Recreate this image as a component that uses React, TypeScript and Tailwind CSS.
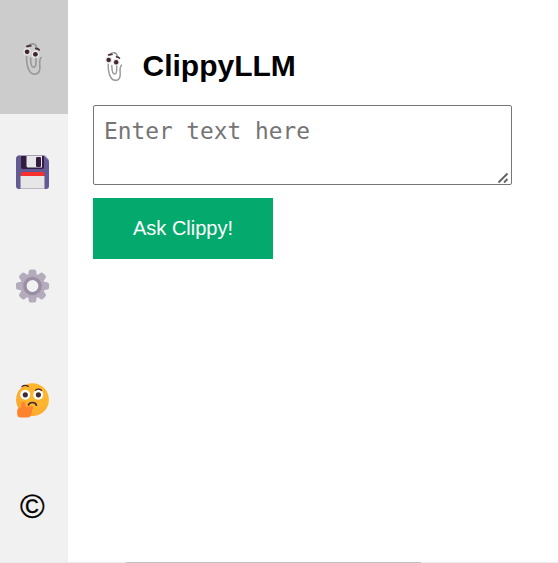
import React from "react";

function Clippy({ className }: { className: string }) {
  return (
    <svg viewBox="0 0 20 34" preserveAspectRatio="none" className={className} fill="none">
      <path
        d="M5.4 4.5C7.2.9 12.8.8 13.6 5.6M3.6 14.2C3.4 19 4.1 24.5 6.1 28.4C9.1 34 16 33.2 16.8 27.2C17.4 22.8 15.3 18.9 18.2 15.5M7.6 16C7.8 19.5 7.4 24.6 10.4 25.2C13.2 25.7 13.1 21.4 13 16"
        stroke="#999"
        strokeWidth="1.6"
        strokeLinecap="round"
      />
      <circle cx="4.1" cy="9.8" r="3.8" fill="#e6e6e6" />
      <circle cx="12.4" cy="12.3" r="3.8" fill="#e6e6e6" />
      <circle cx="4.1" cy="9.8" r="2.4" fill="#3e2530" />
      <circle cx="12.4" cy="12.3" r="2.4" fill="#3e2530" />
      <path d="M3.9 4.4Q5.6 3.6 7.8 3.8M12.8 6.5Q15 6.4 16.1 7.9" stroke="#4b343e" strokeWidth="1.8" strokeLinecap="round" />
    </svg>
  );
}

function Floppy() {
  return (
    <svg viewBox="0 0 34 34" className="size-[34px]">
      <path d="M4 .3H27Q29 .3 30 1.5L32 4Q33 5 33 7V31Q33 34 30 34H3Q0 34 0 31V4Q0 .3 4 .3Z" fill="#635994" />
      <path d="M4 .8H27Q29 .8 30 2L32 4.5" fill="none" stroke="#b4acbc" />
      <path d="M5 1H28V12Q28 14 26 14H7Q5 14 5 12Z" fill="#321b41" />
      <path d="M10.5 1H26V12.5H12Q10.5 12.5 10.5 11Z" fill="#e6e6e6" />
      <rect x="20" y="2" width="5" height="10" rx="1.2" fill="#321b41" />
      <path d="M5 21H28V34H5Z" fill="#e6e6e6" />
      <path d="M6 17H27Q28 17 28 18V21H5V18Q5 17 6 17Z" fill="#f92f2d" />
      <path d="M4.5 21V33.5H28.5V21" fill="none" stroke="#b4acbc" strokeWidth=".8" />
    </svg>
  );
}

const teeth = [0, 45, 90, 135, 180, 225, 270, 315];

function Gear() {
  return (
    <svg viewBox="0 0 34 34" className="size-[34px]">
      {teeth.map((a) => (
        <path
          key={a}
          d="M12 8L12.7 2.6Q12.9 .4 15 .4H18Q20.1 .4 20.3 2.6L21 8Z"
          fill="#b4acbc"
          transform={`rotate(${a} 16.5 17)`}
        />
      ))}
      <circle cx="16.5" cy="17" r="9.4" fill="none" stroke="#b4acbc" strokeWidth="6" />
      <circle cx="16.5" cy="17" r="7.6" fill="none" stroke="#998ea4" strokeWidth="3.4" />
    </svg>
  );
}

function Thinking() {
  return (
    <svg viewBox="0 0 34 35" className="h-[35px] w-[34px]">
      <defs>
        <radialGradient id="face" cx=".65" cy=".35" r=".75">
          <stop offset=".5" stopColor="#ffb52e" />
          <stop offset="1" stopColor="#fba52b" />
        </radialGradient>
      </defs>
      <circle cx="16.5" cy="16.7" r="16.4" fill="url(#face)" />
      <circle cx="9.2" cy="11.8" r="5" fill="white" />
      <circle cx="22.3" cy="11.8" r="5" fill="white" />
      <circle cx="9.3" cy="11.8" r="2.6" fill="#402a32" />
      <circle cx="22.4" cy="11.8" r="2.6" fill="#402a32" />
      <path d="M6 3.6Q8.8 1.4 12.2 3.4M19.4 7.2Q22.6 5.1 25.6 7.4" fill="none" stroke="#402a32" strokeWidth="1.3" strokeLinecap="round" />
      <path d="M12.5 22Q13.2 19.5 16.4 19.5Q19.6 19.5 20.4 22.2" fill="none" stroke="#402a32" strokeWidth="1.7" strokeLinecap="round" />
      <path d="M5.3 24.5V20.5Q5.6 18.7 7.3 18.7Q9 18.7 9.2 20.5L9.6 24L15.5 23.3Q17.7 23.4 17.2 25.4L15.8 27Q16.8 28.3 15.5 30Q15.4 34.6 11 34.6H4.5Q1.2 34.4 1.2 31V27.5Q1.3 24.7 5.3 24.5Z" fill="#ff822d" />
    </svg>
  );
}

export default function App() {
  return (
    <div className="flex h-[563px] w-[558px] flex-col overflow-hidden bg-white font-['Liberation_Sans',Arial,sans-serif] text-black">
      <div className="flex h-[562px]">
        <nav className="flex w-[68px] shrink-0 flex-col bg-[#f1f1f1]">
          <button className="flex h-[114px] shrink-0 bg-[#ccc] pt-[42px] pl-[23px]">
            <Clippy className="h-[34px] w-[20px]" />
          </button>
          <button className="flex h-[115px] shrink-0 pt-[41px] pl-4">
            <Floppy />
          </button>
          <button className="flex h-[114px] shrink-0 pt-[40px] pl-4">
            <Gear />
          </button>
          <button className="flex h-[114px] shrink-0 pt-[40px] pl-4">
            <Thinking />
          </button>
          <button className="flex h-[105px] shrink-0 pt-[31px] pl-[20px] text-[33.5px] leading-[38px] [-webkit-text-stroke:0.25px_black]">©</button>
        </nav>
        <main className="flex grow flex-col items-start pl-[25px]">
          <h1 className="flex h-[105px] pt-[46px] text-[30px] leading-[40px] font-bold">
            <Clippy className="mt-[5px] mr-[19.5px] ml-[12px] h-[31px] w-[18px]" />
            ClippyLLM
          </h1>
          <div className="flex h-20 w-[419px] items-end justify-between rounded-[2px] border border-[#767676] bg-white">
            <div className="self-start pt-[10px] pl-[10px] font-['DejaVu_Sans_Mono',monospace] text-[22.8px] leading-[30px] whitespace-pre text-[#757575]">
              Enter text here
            </div>
            <svg viewBox="0 0 13 12" className="mr-px h-3 w-[13px]" fill="none" stroke="#606060" strokeWidth="1.8">
              <path d="M1.5 10.5L10.5 1.5M7 10.5L10.5 7" />
            </svg>
          </div>
          <button className="mt-[13px] h-[61px] w-[180px] bg-[#04aa6d] pb-[2px] text-center text-[20px] text-white">Ask Clippy!</button>
        </main>
      </div>
      <div className="flex h-px bg-[#ebebeb] pl-[126px]">
        <div className="h-px w-[295px] bg-[#c1c1c1]" />
      </div>
    </div>
  );
}
